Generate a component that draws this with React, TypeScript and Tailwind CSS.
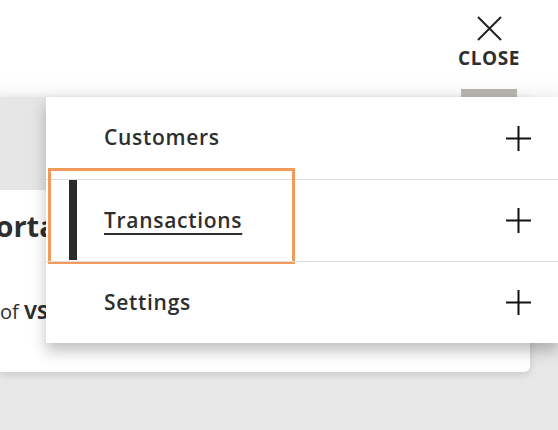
const items = ['Customers', 'Transactions', 'Settings'];

function PlusIcon() {
  return (
    <svg width="27" height="27" viewBox="0 0 27 27" className="text-[#111]">
      <path d="M13.5 1v25M1 13.5h25" stroke="currentColor" strokeWidth="2" fill="none" />
    </svg>
  );
}

export default function App() {
  return (
    <div className="relative w-[558px] h-[430px] overflow-hidden bg-[#e8e8e8] font-['Open_Sans',sans-serif] text-[#2e2e2e]">
      {/* Header */}
      <header className="h-[97px] bg-gradient-to-b from-white from-80% to-[#f7f7f7] flex justify-end pr-[38px]">
        <button className="relative flex flex-col items-center w-[62px] pt-[16px]">
          <svg width="25" height="25" viewBox="0 0 25 25" className="text-[#222]">
            <path d="M1 1l23 23M24 1L1 24" stroke="currentColor" strokeWidth="2" fill="none" />
          </svg>
          <span className="mt-[8px] text-[19px] font-bold tracking-[0.6px] leading-none">CLOSE</span>
          <span className="absolute left-[3px] bottom-0 w-[56px] h-[8px] bg-[#b5b1ab]" />
        </button>
      </header>

      {/* Card behind */}
      <div className="w-[530px] h-[275px] rounded-br-[6px] bg-white shadow-[0_2px_8px_rgba(0,0,0,0.15)] overflow-hidden">
        <div className="h-[93px] bg-gradient-to-r from-[#e6e6e6] to-[#dcdcdc]" />
        <div className="-ml-[61px] pt-[21px] whitespace-nowrap">
          <h2 className="text-[29px] font-bold leading-none">Important</h2>
        </div>
        <p className="mt-[57px] text-[20px] whitespace-nowrap">
          of <b>VS</b> code
        </p>
      </div>

      {/* Dropdown menu */}
      <nav className="absolute left-[46px] top-[97px] w-[512px] bg-white shadow-[0_8px_14px_rgba(0,0,0,0.25)]">
        {items.map((item, i) => (
          <div
            key={item}
            className={`relative h-[82px] flex items-center justify-between pl-[58px] pr-[26px] ${i > 0 ? 'border-t border-[#dedede]' : ''}`}
          >
            {item === 'Transactions' && (
              <>
                <span className="absolute left-[23px] top-0 w-[8px] h-[80px] bg-[#2b2b2a]" />
                <span className="absolute left-[2px] -top-[12px] w-[247px] h-[96px] border-[3px] border-[#f19a5b]" />
              </>
            )}
            <span
              className={`text-[21px] font-semibold tracking-[0.7px] ${item === 'Transactions' ? 'underline underline-offset-[5px] decoration-[1.5px]' : ''}`}
            >
              {item}
            </span>
            <PlusIcon />
          </div>
        ))}
      </nav>
    </div>
  );
}
